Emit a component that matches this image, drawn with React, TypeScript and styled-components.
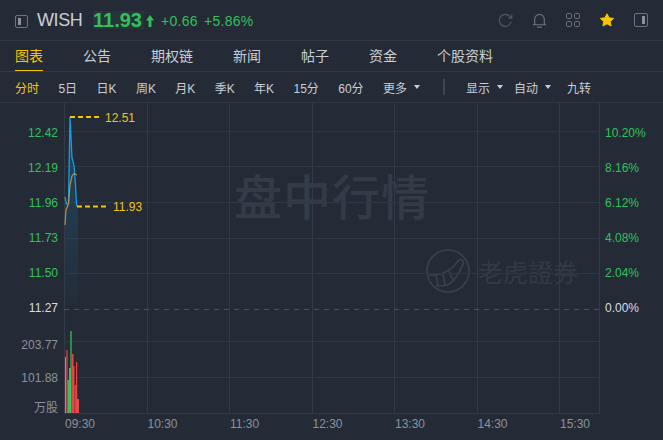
import styled, { createGlobalStyle } from "styled-components";

const tabs = ["图表", "公告", "期权链", "新闻", "帖子", "资金", "个股资料"];
const periods = ["分时", "5日", "日K", "周K", "月K", "季K", "年K", "15分", "60分"];
const priceLabels = ["12.42", "12.19", "11.96", "11.73", "11.50", "11.27"];
const pctLabels = ["10.20%", "8.16%", "6.12%", "4.08%", "2.04%", "0.00%"];
const times = ["09:30", "10:30", "11:30", "12:30", "13:30", "14:30", "15:30"];

const gridX = [0.5, 83.5, 165.5, 248.5, 330.5, 413.5, 495.5, 535.5];
const gridY = [28.5, 63.5, 99.5, 135.5, 170.5, 238.5, 274.5];

// x, width, top, colour of each volume bar, in plot coordinates
const bars: [number, number, number, string][] = [
  [1, 1.5, 254, "#7fa884"],
  [2, 2, 247, "#a8343f"],
  [3.5, 1.5, 277, "#33c05c"],
  [6, 2, 228, "#2c8a4b"],
  [5, 2, 265, "#38c260"],
  [8, 1.5, 251, "#f0413f"],
  [8.5, 2, 263, "#e8454a"],
  [10.5, 1.5, 282, "#d64046"],
  [12, 1.2, 259, "#f0413f"],
  [13, 2, 296, "#d9504f"],
];

export default function App() {
  return (
    <Page>
      <GlobalStyle />
      <Header>
        <PanelIcon viewBox="0 0 13 13">
          <rect x="0.5" y="0.5" width="12" height="12" rx="1.5" fill="none" stroke="#6c7480" />
          <rect x="3" y="3" width="3" height="7" fill="#8b929c" />
        </PanelIcon>
        <Symbol>WISH</Symbol>
        <Price>11.93</Price>
        <UpArrow viewBox="0 0 8 12">
          <path d="M4 0 8 5.5H5.4V12H2.6V5.5H0Z" fill="#33c05c" />
        </UpArrow>
        <Change>+0.66</Change>
        <Change>+5.86%</Change>
        <Tools>
          <svg width="15" height="15" viewBox="0 0 15 15" fill="none" stroke="#4f5864" strokeWidth="1.2">
            <path d="M13.2 8.6A6 6 0 1 1 11.6 3.1L13.6 5" />
            <path d="M13.8 1.6V5.2H10.4" />
          </svg>
          <svg width="13" height="15" viewBox="0 0 13 15" fill="none" stroke="#6c7480" strokeWidth="1.1">
            <path d="M1.7 11V6.2a4.8 4.8 0 0 1 9.6 0V11l1 .7H.7Z" />
            <path d="M4 14.2h5" />
          </svg>
          <svg width="14" height="14" viewBox="0 0 14 14" fill="none" stroke="#6c7480">
            <rect x="0.5" y="0.5" width="5" height="5" rx="1.2" />
            <rect x="8.5" y="0.5" width="5" height="5" rx="1.2" />
            <rect x="0.5" y="8.5" width="5" height="5" rx="1.2" />
            <rect x="8.5" y="8.5" width="5" height="5" rx="1.2" />
          </svg>
          <svg width="14" height="14" viewBox="0 0 15 14">
            <path
              d="M7.5.3 9.7 4.6 14.6 5.3 11 8.6 11.9 13.4 7.5 11.1 3.1 13.4 4 8.6.4 5.3 5.3 4.6Z"
              fill="#f7c600"
              stroke="#f7c600"
              strokeLinejoin="round"
            />
          </svg>
          <svg width="14" height="14" viewBox="0 0 14 14">
            <rect x="0.5" y="0.5" width="13" height="13" rx="1.5" fill="none" stroke="#6c7480" />
            <rect x="8" y="3" width="3" height="8" fill="#8b929c" />
          </svg>
        </Tools>
      </Header>

      <TabBar>
        {tabs.map((t, i) => (
          <Tab key={t} $active={i === 0}>
            {t}
          </Tab>
        ))}
      </TabBar>

      <PeriodBar>
        {periods.map((p, i) => (
          <Period key={p} $active={i === 0}>
            {p}
          </Period>
        ))}
        <Period>
          更多
          <Caret />
        </Period>
        <Divider />
        <Option $after={-8.4}>
          显示
          <Caret />
        </Option>
        <Option $after={-3.4}>
          自动
          <Caret />
        </Option>
        <Period>九转</Period>
      </PeriodBar>

      <Chart>
        <LeftAxis>
          {priceLabels.map((l) => (
            <PriceTick key={l} $base={l === "11.27"}>
              {l}
            </PriceTick>
          ))}
          <VolumeTicks>
            <VolumeTick>203.77</VolumeTick>
            <VolumeTick>101.88</VolumeTick>
            <VolumeTick>万股</VolumeTick>
          </VolumeTicks>
        </LeftAxis>

        <Plot>
          <Watermark>盘中行情</Watermark>
          <Brand>
            <svg width="44" height="44" viewBox="0 0 44 44" fill="none" stroke="#3a424e" strokeWidth="1.6">
              <circle cx="22" cy="22" r="21" />
              <path d="M3 26C10 27 20 24 26 19L33 11C35 9 38 12 37 15 34 24 28 33 21 36 17 37 13 37 10 37" />
              <path d="M10 26l2 11M17 25l2 11M23 22l4 10" />
            </svg>
            老虎證券
          </Brand>
          <PlotSvg width="536" height="310" viewBox="0 0 536 310">
            <defs>
              <linearGradient id="area" x1="0" y1="0" x2="0" y2="1">
                <stop offset="0" stopColor="#1d7fb8" stopOpacity="0.35" />
                <stop offset="1" stopColor="#1d7fb8" stopOpacity="0" />
              </linearGradient>
            </defs>
            {gridX.map((x) => (
              <line key={x} x1={x} y1="0" x2={x} y2="310" stroke="#323c49" />
            ))}
            {gridY.map((y) => (
              <line key={y} x1="0" y1={y} x2="536" y2={y} stroke="#2e3743" />
            ))}
            <line x1="0" y1="206.5" x2="536" y2="206.5" stroke="#4a525d" strokeDasharray="5 5" />
            <path
              d="M1 94 2.5 101 4.5 100 6 14 8 55 10 62 11.5 82 12.5 102 14 103.5V206H1Z"
              fill="url(#area)"
            />
            <path
              d="M1 94 2.5 101 4.5 100 6 14 8 55 10 62 11.5 82 12.5 102 14 103.5"
              fill="none"
              stroke="#119fe3"
              strokeWidth="1.3"
            />
            <path
              d="M1 122 2 107 4.5 101 6 82 8 73 10 70.5 13 72"
              fill="none"
              stroke="#c88a3c"
              strokeWidth="1.2"
            />
            <line x1="6" y1="14" x2="36" y2="14" stroke="#f7c600" strokeWidth="2" strokeDasharray="5 3" />
            <line x1="13" y1="103.5" x2="42" y2="103.5" stroke="#f7c600" strokeWidth="2" strokeDasharray="5 3" />
            {bars.map(([x, w, top, color], i) => (
              <rect key={i} x={x} y={top} width={w} height={310 - top} fill={color} />
            ))}
          </PlotSvg>
          <PriceMark $top={8} $left={41}>
            12.51
          </PriceMark>
          <PriceMark $top={97} $left={49}>
            11.93
          </PriceMark>
          <TimeRow>
            {times.map((t) => (
              <TimeCell key={t}>{t}</TimeCell>
            ))}
          </TimeRow>
        </Plot>

        <RightAxis>
          {pctLabels.map((l) => (
            <PctTick key={l} $base={l === "0.00%"}>
              {l}
            </PctTick>
          ))}
        </RightAxis>
      </Chart>
    </Page>
  );
}

const GlobalStyle = createGlobalStyle`
  body {
    margin: 0;
    background: #242b37;
    font-family: "Liberation Sans", "Noto Sans CJK SC", sans-serif;
  }
`;

const Page = styled.div`
  width: 663px;
  height: 440px;
  overflow: hidden;
  background: #242b37;
  color: #c9ced6;
`;

const Header = styled.div`
  display: flex;
  align-items: center;
  height: 40px;
  padding: 0 15px;
  border-bottom: 1px solid #303a46;
`;

const PanelIcon = styled.svg`
  width: 13px;
  height: 13px;
  margin-right: 9px;
  margin-top: 2px;
`;

const Symbol = styled.div`
  font-size: 18px;
  letter-spacing: -0.4px;
  color: #c9ced6;
  width: 56px;
`;

const Price = styled.div`
  font-size: 20px;
  font-weight: 700;
  line-height: 18px;
  color: #33c05c;
  background: rgba(47, 183, 87, 0.08);
  width: 51px;
  margin-right: 2px;
`;

const UpArrow = styled.svg`
  width: 8px;
  height: 12px;
  margin-right: 7px;
  margin-top: 2px;
`;

const Change = styled.div`
  font-size: 14px;
  color: #33c05c;
  margin-right: 6px;
  letter-spacing: 0.3px;
  margin-top: 1px;
`;

const Tools = styled.div`
  margin-left: auto;
  display: flex;
  align-items: center;
  gap: 20px;
`;

const TabBar = styled.div`
  display: flex;
  gap: 40px;
  height: 30px;
  padding: 0 15px;
  border-bottom: 1px solid #303a46;
`;

const Tab = styled.div<{ $active?: boolean }>`
  font-size: 14px;
  line-height: 30px;
  color: ${(p) => (p.$active ? "#f7c600" : "#c9ced6")};
  border-bottom: ${(p) => (p.$active ? "1px solid #f7c600" : "none")};
  height: 30px;
  box-sizing: border-box;
`;

const PeriodBar = styled.div`
  display: flex;
  align-items: center;
  gap: 19.4px;
  height: 30px;
  padding: 0 15px;
  border-bottom: 1px solid #303a46;
`;

const Period = styled.div<{ $active?: boolean }>`
  display: flex;
  align-items: center;
  font-size: 12px;
  color: ${(p) => (p.$active ? "#f7c600" : "#c9ced6")};
`;

const Option = styled(Period)<{ $after: number }>`
  margin-right: ${(p) => p.$after}px;
`;

const Caret = styled.span`
  width: 0;
  height: 0;
  margin-left: 7px;
  border-left: 3.5px solid transparent;
  border-right: 3.5px solid transparent;
  border-top: 4px solid #c9ced6;
`;

const Divider = styled.div`
  width: 2px;
  height: 16px;
  background: #3d4652;
  margin: 0 1.6px 0 3.6px;
`;

const Chart = styled.div`
  display: flex;
  height: 337px;
`;

const LeftAxis = styled.div`
  width: 64px;
  display: flex;
  flex-direction: column;
  align-items: flex-end;
  padding: 20px 6px 0 0;
  box-sizing: border-box;
`;

const PriceTick = styled.div<{ $base?: boolean }>`
  font-size: 12px;
  height: 35px;
  line-height: 20px;
  color: ${(p) => (p.$base ? "#d8dde4" : "#33c05c")};
`;

const VolumeTicks = styled.div`
  display: flex;
  flex-direction: column;
  align-items: flex-end;
  gap: 13px;
  margin-top: 2px;
`;

const VolumeTick = styled.div`
  font-size: 12px;
  line-height: 20px;
  color: #8b929c;
  &:last-child {
    margin-top: -3px;
  }
`;

const Plot = styled.div`
  position: relative;
  width: 536px;
`;

const PlotSvg = styled.svg`
  display: block;
  position: relative;
`;

const Watermark = styled.div`
  position: absolute;
  left: 170px;
  top: 68px;
  font-size: 48px;
  letter-spacing: 1px;
  line-height: 56px;
  font-weight: 500;
  color: #333b47;
  white-space: nowrap;
`;

const Brand = styled.div`
  position: absolute;
  left: 362px;
  top: 146px;
  display: flex;
  align-items: center;
  gap: 8px;
  font-size: 25px;
  color: #323a46;
  white-space: nowrap;
`;

const PriceMark = styled.div<{ $top: number; $left: number }>`
  position: absolute;
  top: ${(p) => p.$top}px;
  left: ${(p) => p.$left}px;
  font-size: 12px;
  line-height: 14px;
  color: #f0c419;
`;

const TimeRow = styled.div`
  display: flex;
  height: 20px;
  align-items: center;
  border-top: 1px solid #323c49;
  box-sizing: border-box;
`;

const TimeCell = styled.div`
  width: 82.5px;
  padding-left: 1px;
  box-sizing: border-box;
  font-size: 12px;
  color: #8b929c;
  flex-shrink: 0;
  &:last-child {
    width: 40px;
    overflow: visible;
  }
`;

const RightAxis = styled.div`
  width: 63px;
  padding: 20px 0 0 5px;
  box-sizing: border-box;
`;

const PctTick = styled.div<{ $base?: boolean }>`
  font-size: 12px;
  height: 35px;
  line-height: 20px;
  color: ${(p) => (p.$base ? "#d8dde4" : "#33c05c")};
`;
